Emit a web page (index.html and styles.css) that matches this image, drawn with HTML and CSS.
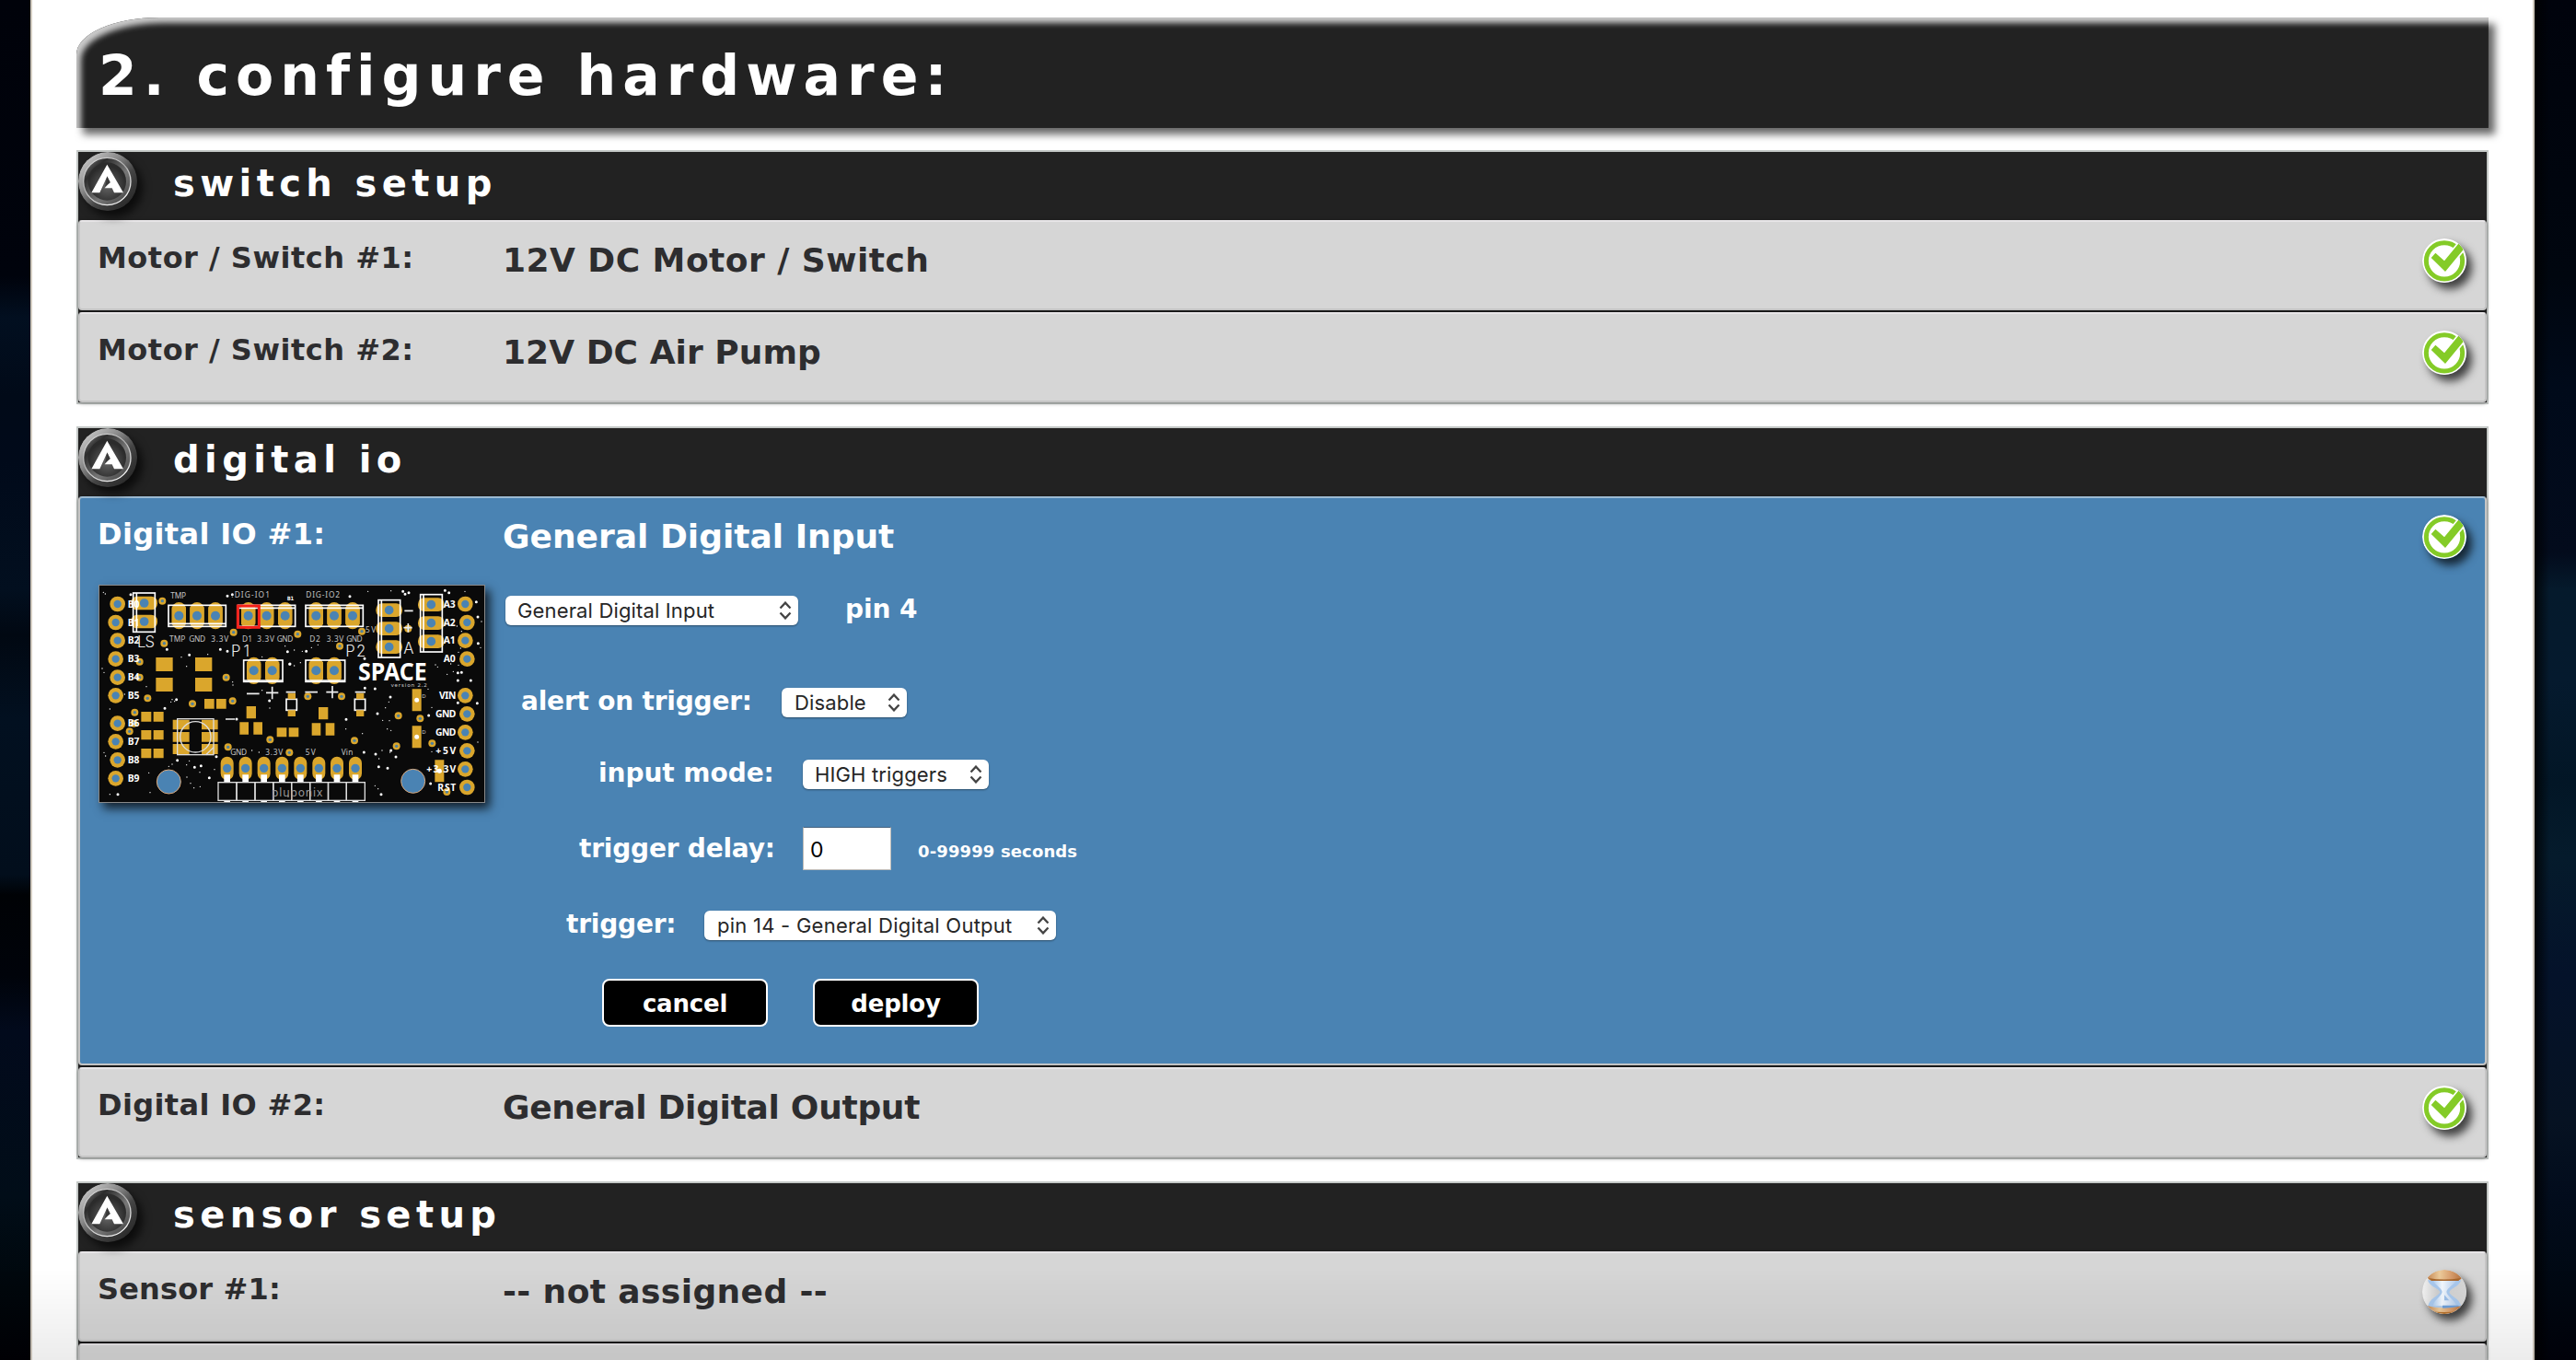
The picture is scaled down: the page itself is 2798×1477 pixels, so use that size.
FILE: index.html
```
<!DOCTYPE html>
<html lang="en">
<head>
<meta charset="utf-8">
<title>configure hardware</title>
<link rel="stylesheet" href="styles.css">
</head>
<body>
<svg class="defs" width="0" height="0">
  <defs>
    <linearGradient id="rim" x1="0.1" y1="0.1" x2="0.85" y2="0.9"><stop offset="0" stop-color="#c8c8c8"/><stop offset=".35" stop-color="#8a8a8a"/><stop offset=".65" stop-color="#444"/><stop offset="1" stop-color="#2a2a2a"/></linearGradient>
    <linearGradient id="bevel" x1="0" y1="0" x2="1" y2="1"><stop offset="0" stop-color="#8c8c8c"/><stop offset=".25" stop-color="#2c2c2c"/><stop offset=".6" stop-color="#777"/><stop offset="1" stop-color="#3a3a3a"/></linearGradient>
    <linearGradient id="shine" x1="0" y1="0" x2=".6" y2="1"><stop offset="0" stop-color="#ddd"/><stop offset=".5" stop-color="#b0b0b0"/><stop offset="1" stop-color="#f2f2f2"/></linearGradient>
    <radialGradient id="core" cy=".6"><stop offset="0" stop-color="#666"/><stop offset="1" stop-color="#2b2b2b"/></radialGradient>
    <linearGradient id="wood"><stop offset="0" stop-color="#c98d58"/><stop offset=".35" stop-color="#eccb9b"/><stop offset=".65" stop-color="#dba372"/><stop offset="1" stop-color="#b87440"/></linearGradient>
    <linearGradient id="glass"><stop offset="0" stop-color="#aecdf0"/><stop offset=".4" stop-color="#f4f9ff"/><stop offset="1" stop-color="#b4cdec"/></linearGradient>
    <linearGradient id="plate"><stop offset="0" stop-color="#f4f4f4"/><stop offset=".35" stop-color="#d0d0d0"/><stop offset="1" stop-color="#d8d8d8"/></linearGradient>
    <clipPath id="disc"><circle cx="72" cy="72" r="72"/></clipPath>
    <symbol id="logo" viewBox="0 0 192 192">
      <circle cx="96" cy="96" r="96" fill="url(#rim)"/>
      <circle cx="94" cy="96" r="77" fill="url(#bevel)" stroke="url(#shine)" stroke-width="4"/>
      <circle cx="94" cy="96" r="62" fill="url(#core)"/>
      <path fill="#fff" d="M94 41L147 133H117L110 118H86L104 98L94 80L70 133H43Z"/>
      <path fill="#3a3a3a" d="M94 79L99 89L104 100L87 113Z"/>
    </symbol>
    <symbol id="check" viewBox="0 0 144 144">
      <circle cx="72" cy="72" r="72" fill="#fff"/>
      <circle cx="72" cy="73" r="59" fill="none" stroke="#84cb27" stroke-width="15"/>
      <path d="M29 63L43 47L72 73L119 16L136 34L75 108Z" fill="#84cb27" stroke="#fff" stroke-width="10" paint-order="stroke" clip-path="url(#disc)"/>
    </symbol>
    <symbol id="hourglass" viewBox="0 0 144 144">
      <g clip-path="url(#disc)">
        <rect width="144" height="144" fill="url(#plate)"/>
        <path d="M18 34H126C122 54 92 60 88 73C92 88 122 92 128 122H18C22 92 52 88 58 73C54 60 22 54 18 34Z" fill="#a9c9ee"/>
        <path d="M36 36H110C102 50 82 58 79 72C82 88 104 96 112 118H34C40 96 62 88 65 72C62 58 42 50 36 36Z" fill="url(#glass)"/>
        <path d="M72 82L88 100H72Z" fill="#9cc0ea"/>
        <path d="M66 116H118L122 126H66Z" fill="#6f9fd8"/>
        <path d="M18 0H128V28Q124 35 110 35H36Q20 35 18 26Z" fill="url(#wood)"/>
        <path d="M20 27Q70 36 126 27L118 36H30Z" fill="#a8682e"/>
        <path d="M18 118Q70 132 128 118V144H18Z" fill="url(#wood)"/>
        <path d="M24 134Q70 142 120 134V144H24Z" fill="#b8742f"/>
      </g>
    </symbol>
    <symbol id="updown" viewBox="0 0 14 20"><path d="M1.5 7.5L7 1.6L12.500 7.500M1.500 12.500L7 18.400L12.500 12.500" fill="none" stroke="#444" stroke-width="2.300"/></symbol>
    <g id="ring"><circle r="25" fill="#daa62c"/><circle r="12.500" fill="#4a83b3"/></g>
    <g id="via"><circle r="12" fill="#daa62c"/><circle r="5" fill="#4f82a0"/></g>
    <g id="pad"><rect x="-23" y="-44" width="46" height="88" rx="23" fill="#daa62c"/><rect x="-23" y="-28" width="46" height="56" fill="#daa62c"/><circle r="15" fill="#4a83b3"/></g>
    <g id="padh"><rect x="-43" y="-22" width="86" height="44" rx="20" fill="#daa62c"/><circle r="14.500" fill="#4a83b3"/></g>
    <g id="pinout"><rect x="-21" y="-38" width="42" height="76" rx="21" fill="#daa62c"/><circle r="14" fill="#4a83b3"/><path d="M-10 21H10V44H-10Z M-10 105H10V115H-10Z" fill="#fff"/><rect x="-29" y="46" width="60" height="59" fill="none" stroke="#ddd" stroke-width="4"/></g>
    <g id="jack"><rect x="-17" y="-18" width="34" height="36" fill="none" stroke="#fff" stroke-width="5"/><path d="M-12 -38H13V-18H-12Z M-12 18H13V38H-12Z" fill="#daa62c"/></g>
    <g id="trio"><path d="M-15 -38H16V2H-15Z M-37 14H-8V54H-37Z M8 14H37V54H8Z" fill="#daa62c"/></g>
  </defs>
</svg>

<main class="page">
  <h1 class="banner">2. configure hardware:</h1>

  <section class="box">
    <h2 class="box-head"><svg class="logo"><use href="#logo"/></svg><span>switch setup</span></h2>
    <div class="row"><span class="label">Motor / Switch #1:</span><span class="value value-motor">12V DC Motor / Switch</span><svg class="status"><use href="#check"/></svg></div>
    <div class="row"><span class="label">Motor / Switch #2:</span><span class="value value-pump">12V DC Air Pump</span><svg class="status"><use href="#check"/></svg></div>
  </section>

  <section class="box">
    <h2 class="box-head"><svg class="logo"><use href="#logo"/></svg><span>digital io</span></h2>
    <div class="row row-open">
      <div class="label label-io">
        <span>Digital IO #1:</span>
        <svg class="board" viewBox="0 0 1260 711">
          <rect width="1260" height="711" fill="#0a0a0a"/>
          <g transform="translate(-22 -30)">
            <g stroke="#fff" stroke-linecap="round" fill="none">
              <path stroke-width="4" d="M38 55h0M44 60h0M34 303h0M40 316h0M59 435h0M40 577h0M45 588h0M107 387h0M178 362h0M309 296h0M292 266h0M378 257h0M262 404h0M270 410h0M258 412h0M59 713h0M251 622h0M262 615h0M309 617h0M318 604h0M333 692h0M353 688h0M352 641h0M400 632h0M555 265h0M555 374h0M580 432h0M545 576h0M522 570h0M460 357h0M459 347h0M640 720h0M190 707h0M186 643h0M310 657h0M322 677h0M630 230h0"/>
              <path stroke-width="9" d="M127 62h0M442 67h0M245 241h0M318 259h0M419 241h0M442 247h0M238 433h0M276 404h0M472 468h0M579 408h0M638 248h0M645 289h0M279 602h0M335 625h0M356 620h0M383 659h0M85 713h0M406 590h0M458 62h0"/>
            </g>
            <use href="#ring" x="84" y="93"/><use href="#ring" x="78" y="153"/><use href="#ring" x="84" y="212"/><use href="#ring" x="78" y="272"/><use href="#ring" x="84" y="332"/><use href="#ring" x="78" y="391"/><use href="#ring" x="84" y="482"/><use href="#ring" x="78" y="541"/><use href="#ring" x="84" y="601"/><use href="#ring" x="78" y="661"/>
            <use href="#via" x="230" y="83"/><use href="#via" x="236" y="221"/><use href="#via" x="156" y="281"/><use href="#via" x="156" y="332"/><use href="#via" x="182" y="400"/><use href="#via" x="140" y="446"/><use href="#via" x="137" y="482"/><use href="#via" x="123" y="508"/><use href="#via" x="462" y="185"/><use href="#via" x="438" y="332"/><use href="#via" x="459" y="409"/><use href="#via" x="328" y="418"/><use href="#via" x="444" y="559"/><use href="#via" x="581" y="535"/><use href="#via" x="644" y="577"/>
            <use href="#padh" x="171" y="90"/><use href="#padh" x="171" y="150"/>
            <g fill="none" stroke="#fff" stroke-width="5"><rect x="135" y="57" width="71" height="127"/><path d="M146 57V184"/></g>
            <use href="#pad" x="284" y="131"/><use href="#pad" x="343" y="131"/><use href="#pad" x="403" y="131"/>
            <use href="#pad" x="510" y="131"/><use href="#pad" x="570" y="131"/><use href="#pad" x="630" y="131"/>
            <g fill="none" stroke="#fff" stroke-width="5"><rect x="250" y="97" width="187" height="69"/><path d="M250 157H437"/><rect x="477" y="97" width="186" height="69"/><path d="M477 106H663"/></g>
            <rect x="476" y="99" width="69" height="70" fill="none" stroke="#f5221b" stroke-width="9"/>
            <use href="#pad" x="528" y="310"/><use href="#pad" x="588" y="310"/>
            <g fill="none" stroke="#fff" stroke-width="5"><rect x="495" y="276" width="127" height="70"/><path d="M495 342H622"/></g>
            <path fill="#daa62c" d="M209 267h55v45h-55zM337 267h55v45h-55zM209 333h55v45h-55zM337 333h55v45h-55zM367 402h32v32h-32zM406 402h32v32h-32zM161 444h33v32h-33zM201 444h33v32h-33zM161 504h33v31h-33zM201 504h33v31h-33zM161 564h33v31h-33zM201 564h33v31h-33zM264 470h54v32h-54zM358 470h53v32h-53zM264 510h54v32h-54zM358 510h53v32h-53zM264 549h54v33h-54zM358 549h53v33h-53zM603 496h32v30h-32zM642 496h32v30h-32z"/>
            <g fill="none" stroke="#ddd" stroke-width="4"><rect x="279" y="467" width="118" height="117"/><circle cx="338" cy="526" r="50"/><path d="M372 584L397 560"/></g>
            <use href="#trio" x="519" y="464"/><use href="#jack" x="651" y="421"/>
            <path d="M505 385H546M568 382H608M588 362V403M633 380H664M436 468H466" stroke="#eee" stroke-width="5"/>
            <circle cx="251" cy="672" r="39" fill="#4a83b3" stroke="#daa87a" stroke-width="3"/>
            <use href="#pinout" x="441" y="628"/><use href="#pinout" x="501" y="628"/><use href="#pinout" x="561" y="628"/><use href="#pinout" x="620" y="628"/><use href="#pinout" x="680" y="628"/><use href="#pinout" x="740" y="628"/><use href="#pinout" x="799" y="628"/><use href="#pinout" x="859" y="628"/>
            <g class="silk-bold"><text x="117" y="104">B0</text><text x="117" y="164">B1</text><text x="117" y="223">B2</text><text x="117" y="283">B3</text><text x="117" y="342">B4</text><text x="117" y="402">B5</text><text x="117" y="493">B6</text><text x="117" y="552">B7</text><text x="117" y="612">B8</text><text x="117" y="671">B9</text></g>
            <g class="silk"><text x="257" y="74" textLength="50">TMP</text><text x="455" y="73" textLength="125">:DIG-IO1</text><text x="253" y="215" textLength="52">TMP</text><text x="317" y="215" textLength="53">GND</text><text x="389" y="215" textLength="57">3.3V</text><text x="490" y="215" textLength="33">D1</text><text x="539" y="215" textLength="56">3.3V</text><text x="603" y="215" textLength="53">GND</text><text x="452" y="585" textLength="53">GND</text><text x="566" y="585" textLength="57">3.3V</text></g>
            <g class="silk-big"><text x="148" y="233" textLength="57">LS</text><text x="454" y="265" textLength="60">P1</text></g>
            <text class="silk-brand" x="586" y="719" textLength="166">pluponix</text>
          </g>
          <g transform="translate(608 -30)">
            <g stroke="#fff" stroke-linecap="round" fill="none">
              <path stroke-width="4" d="M270 52h0M345 50h0M8 247h0M30 243h0M50 284h0M86 235h0M107 226h0M56 247h0M30 294h0M490 291h0M497 298h0M528 322h0M548 313h0M540 288h0M565 292h0M572 237h0M565 250h0M630 222h0M637 235h0M560 165h0M575 182h0M340 473h0M318 472h0M333 500h0M345 505h0M338 412h0M327 431h0M198 500h0M252 515h0M316 570h0M306 597h0M293 685h0M303 695h0M342 576h0M363 560h0M478 574h0M586 52h0M628 543h0M640 150h0M466 370h0M478 430h0"/>
              <path stroke-width="9" d="M211 68h0M384 52h0M391 61h0M403 56h0M521 49h0M534 56h0M623 86h0M628 135h0M629 221h0M16 288h0M69 247h0M260 367h0M293 369h0M343 396h0M301 450h0M563 317h0M575 316h0M563 342h0M605 342h0M563 415h0M626 416h0M468 456h0M199 469h0M257 576h0M295 582h0M345 570h0M361 591h0M305 623h0M334 628h0M313 713h0M474 678h0M498 199h0M259 271h0"/>
            </g>
            <use href="#via" x="41" y="191"/><use href="#via" x="250" y="182"/><use href="#via" x="178" y="230"/><use href="#via" x="401" y="173"/><use href="#via" x="74" y="394"/><use href="#via" x="184" y="394"/><use href="#via" x="369" y="457"/><use href="#via" x="440" y="466"/><use href="#via" x="479" y="547"/><use href="#via" x="363" y="556"/><use href="#via" x="226" y="538"/><use href="#via" x="527" y="705"/>
            <use href="#pad" x="101" y="131"/><use href="#pad" x="160" y="131"/><use href="#pad" x="220" y="131"/>
            <g fill="none" stroke="#fff" stroke-width="5"><rect x="67" y="97" width="187" height="69"/><path d="M67 106H254"/></g>
            <use href="#pad" x="101" y="310"/><use href="#pad" x="160" y="310"/>
            <g fill="none" stroke="#fff" stroke-width="5"><rect x="67" y="276" width="128" height="70"/><path d="M67 342H195"/></g>
            <use href="#padh" x="339" y="113"/><use href="#padh" x="339" y="173"/><use href="#padh" x="339" y="233"/>
            <g fill="none" stroke="#fff" stroke-width="5"><rect x="304" y="80" width="71" height="187"/><path d="M314 80V267"/></g>
            <use href="#padh" x="476" y="95"/><use href="#padh" x="476" y="155"/><use href="#padh" x="476" y="215"/>
            <g fill="none" stroke="#fff" stroke-width="5"><rect x="441" y="62" width="71" height="187"/><path d="M451 62V249"/></g>
            <use href="#trio" x="124" y="467"/><use href="#jack" x="244" y="421"/>
            <path d="M65 380H106M134 380H173M154 360V400M228 380H262M389 115H417M386 170H414M401 156V185" stroke="#eee" stroke-width="5"/>
            <path fill="#daa62c" d="M414 370h30v72h-30zM414 490h30v72h-30zM488 601h30v72h-30z"/>
            <path d="M429 406h0M429 526h0M503 637h0" stroke="#fff" stroke-width="15" stroke-linecap="round"/>
            <circle cx="417" cy="670" r="39" fill="#4a83b3" stroke="#daa87a" stroke-width="3"/>
            <use href="#ring" x="587" y="93"/><use href="#ring" x="593" y="153"/><use href="#ring" x="587" y="212"/><use href="#ring" x="593" y="272"/><use href="#ring" x="587" y="391"/><use href="#ring" x="593" y="451"/><use href="#ring" x="587" y="511"/><use href="#ring" x="593" y="571"/><use href="#ring" x="587" y="631"/><use href="#ring" x="593" y="690"/>
            <g class="silk-bold"><text x="516" y="104">A3</text><text x="516" y="164">A2</text><text x="516" y="223">A1</text><text x="516" y="283">A0</text><text x="502" y="402" textLength="55">VIN</text><text x="490" y="462" textLength="67">GND</text><text x="490" y="522" textLength="67">GND</text><text x="491" y="582" textLength="66">+5V</text><text x="461" y="642" textLength="96">+3.3V</text><text x="497" y="701" textLength="60">RST</text></g>
            <text class="silk-tiny" x="7" y="80">B1</text>
            <g class="silk"><text x="68" y="73" textLength="110">DIG-IO2</text><text x="80" y="215" textLength="34">D2</text><text x="135" y="215" textLength="56">3.3V</text><text x="200" y="215" textLength="52">GND</text><text x="262" y="186" textLength="34">5V</text><text x="66" y="585" textLength="33">5V</text><text x="183" y="585" textLength="38">Vin</text></g>
            <g class="silk-small"><text x="345" y="362" textLength="117">version 2.2</text><text x="446" y="398">D</text><text x="446" y="517">D</text></g>
            <g class="silk-big"><text x="197" y="265" textLength="66">P2</text><text x="386" y="256">A</text></g>
            <text class="silk-title" x="238" y="343" textLength="224" lengthAdjust="spacingAndGlyphs">SPACE</text>
          </g>
          <rect x="1.500" y="1.500" width="1257" height="708" fill="none" stroke="#8a8a8a" stroke-width="3"/>
        </svg>
      </div>
      <div class="value value-open">
        <span>General Digital Input</span>
        <div class="form">
          <div class="field field-type"><div class="select"><span>General Digital Input</span><svg><use href="#updown"/></svg></div><b class="pin">pin 4</b></div>
          <div class="field field-alert"><label>alert on trigger:</label><div class="select"><span>Disable</span><svg><use href="#updown"/></svg></div></div>
          <div class="field field-mode"><label>input mode:</label><div class="select"><span>HIGH triggers</span><svg><use href="#updown"/></svg></div></div>
          <div class="field field-delay"><label>trigger delay:</label><input class="text" type="text" value="0"><small>0-99999 seconds</small></div>
          <div class="field field-trigger"><label>trigger:</label><div class="select"><span>pin 14 - General Digital Output</span><svg><use href="#updown"/></svg></div></div>
          <div class="actions"><button>cancel</button><button>deploy</button></div>
        </div>
      </div>
      <svg class="status"><use href="#check"/></svg>
    </div>
    <div class="row"><span class="label label-io">Digital IO #2:</span><span class="value value-output">General Digital Output</span><svg class="status"><use href="#check"/></svg></div>
  </section>

  <section class="box">
    <h2 class="box-head"><svg class="logo"><use href="#logo"/></svg><span>sensor setup</span></h2>
    <div class="row"><span class="label label-sensor">Sensor #1:</span><span class="value value-none">-- not assigned --</span><svg class="status"><use href="#hourglass"/></svg></div>
    <div class="row row-cut"></div>
  </section>
</main>
<div class="fade"></div>
</body>
</html>
```
FILE: styles.css
```
* { box-sizing: border-box; }

html { height: 100%; overflow: hidden; }

body {
  margin: 0;
  height: 100%;
  overflow: hidden;
  display: flex;
  justify-content: space-between;
  font-family: "DejaVu Sans", Verdana, sans-serif;
  font-weight: bold;
  background: #00040c;
}

body::before,
body::after { content: ""; height: 100%; }

body::before {
  width: 33px;
  background: linear-gradient(#00020a 0, #00030c 300px, #020f20 345px, #010a18 430px, #010a1a 500px, #020f1f 640px, #010812 690px, #021020 780px, #020e1c 950px, #000205 972px, #00030a 1060px, #020a1c 1120px, #010d18 1300px, #00070c 1400px, #000105);
}

body::after {
  width: 45px;
  background: linear-gradient(90deg, rgba(0, 0, 0, .8), rgba(0, 0, 0, 0) 16px),
    linear-gradient(#00030c 0, #00060f 300px, #000a1a 420px, #030b1c 600px, #051a2c 640px, #051a2e 740px, #021626 850px, #051b2c 930px, #04122a 1060px, #061222 1220px, #020c1c 1300px, #000812 1400px, #00020a);
}

.defs { position: absolute; }

.page {
  flex: none;
  width: 2720px;
  height: 100%;
  overflow: hidden;
  padding: 19px 48px 0;
  border: solid #d2cbc0;
  border-width: 0 2px;
  background: #fff;
}

.banner {
  margin: 0 0 24px;
  height: 120px;
  padding-left: 24px;
  border-radius: 90px 0 0 0 / 40px 0 0 0;
  background: #222;
  box-shadow: inset 5px 6px 6px #ccc, 7px 7px 9px rgba(0, 0, 0, .6);
  color: #fff;
  font-size: 60px;
  line-height: 126px;
  letter-spacing: 7px;
}

.box {
  margin-bottom: 24px;
  border: 2px solid #c4c8c6;
  background: #222;
}

.box:last-child { margin-bottom: 0; border-bottom: 0; }

.box-head {
  display: flex;
  gap: 39px;
  margin: 0;
  height: 74px;
  color: #fff;
  font-size: 40px;
  line-height: 69px;
  letter-spacing: 5.4px;
}

.logo {
  flex: none;
  width: 64px;
  height: 64px;
  border-radius: 50%;
  box-shadow: 6px 7px 10px rgba(0, 0, 0, .65);
}

.row {
  display: flex;
  height: 98px;
  padding: 0 20px 0 19px;
  border: 2px solid #c5c5c5;
  border-top-color: #e7e5e7;
  border-radius: 4px;
  background: #d6d6d6;
  box-shadow: 0 1px 4px rgba(0, 0, 0, .4);
  color: #2d2d2f;
}

.row + .row { margin-top: 2px; }

.row-open {
  height: 618px;
  border-top-color: #9cbad2;
  background: #4a83b3;
  color: #fff;
}

.row-cut {
  height: 18px;
  border-bottom: 0;
  border-radius: 4px 4px 0 0;
}

.label {
  flex: none;
  width: 440px;
  font-size: 32px;
  line-height: 78px;
  letter-spacing: .5px;
}

.label-io { letter-spacing: .35px; }
.label-sensor { letter-spacing: .15px; }

.value {
  flex: 1;
  font-size: 36px;
  line-height: 83px;
}

.value-motor { letter-spacing: .47px; }
.value-pump { letter-spacing: .05px; }
.value-output { letter-spacing: -.3px; }
.value-none { letter-spacing: .4px; }

.status {
  flex: none;
  width: 48px;
  height: 48px;
  margin-top: 18px;
  border-radius: 50%;
  box-shadow: 6px 7px 10px rgba(0, 0, 0, .7);
}

.label > span,
.value-open > span { display: block; }

.board {
  display: block;
  width: 420px;
  height: 237px;
  margin: 16px 0 0 1px;
  box-shadow: 5px 6px 10px rgba(0, 0, 0, .75);
  letter-spacing: 0;
}

.board text { line-height: 1; }
.silk { fill: #c4c4c4; font: 25px "Noto Sans", sans-serif; }
.silk-bold { fill: #fff; font: bold 31px "Noto Sans", sans-serif; }
.silk-big { fill: #e8e8e8; font: 300 50px Inter, sans-serif; }
.silk-small { fill: #ccc; font: 18px "Noto Sans", sans-serif; }
.silk-tiny { fill: #fff; font: bold 18px "DejaVu Sans Mono", monospace; }
.silk-brand { fill: #999; font: 36px "Noto Sans", sans-serif; }
.silk-title { fill: #fff; font: 700 78px "Noto Sans", sans-serif; }

.form { font-size: 28px; line-height: 29px; letter-spacing: -.2px; }

.field { display: flex; align-items: flex-start; }

.field-type { margin: 23px 0 68px 3px; }
.field-alert { margin: 0 0 46px 20px; }
.field-mode { margin: 0 0 41px 104px; }
.field-delay { margin: 0 0 44px 83px; line-height: 47px; }
.field-trigger { margin: 0 0 42px 69px; line-height: 30px; }

.pin { margin-left: 51px; letter-spacing: -.1px; }
.field-alert label { width: 283px; }
.field-mode label { width: 222px; letter-spacing: -.05px; }
.field-delay label { width: 243px; }
.field-trigger label { width: 150px; }

.select {
  display: flex;
  justify-content: space-between;
  align-items: center;
  height: 32px;
  padding: 0 7px 0 13px;
  border-radius: 6px;
  background: #fff;
  box-shadow: 0 1px 2px rgba(0, 0, 0, .4);
  color: #262626;
  font: 22px/32px Inter, sans-serif;
  letter-spacing: .15px;
}

.select svg { width: 14px; height: 20px; }

.field-type .select { width: 318px; }
.field-alert .select { width: 136px; padding-left: 14px; }
.field-mode .select { width: 202px; }
.field-trigger .select { width: 382px; padding-left: 14px; letter-spacing: .25px; }

.text {
  width: 96px;
  height: 47px;
  padding: 2px 7px 0;
  border: 1px solid #c0bdb9;
  border-top: 1px solid #44617e;
  border-radius: 0;
  background: #fff;
  color: #000;
  font: 23px Inter, sans-serif;
}

.field-delay small {
  margin-left: 29px;
  height: 47px;
  font-size: 18px;
  line-height: 54px;
  letter-spacing: .13px;
}

.actions { display: flex; gap: 49px; margin-left: 108px; }

.actions button {
  width: 180px;
  height: 52px;
  padding: 2px 0 0;
  border: 2px solid #fff;
  border-radius: 8px;
  background: #000;
  color: #fff;
  font: bold 26px/46px "DejaVu Sans", Verdana, sans-serif;
  letter-spacing: -.2px;
}

/* darkens the content that runs off the lower edge of the window */
.fade {
  position: fixed;
  inset: auto 0 0;
  height: 100px;
  background: linear-gradient(rgba(0, 0, 0, 0), rgba(0, 0, 0, .075));
}
```
